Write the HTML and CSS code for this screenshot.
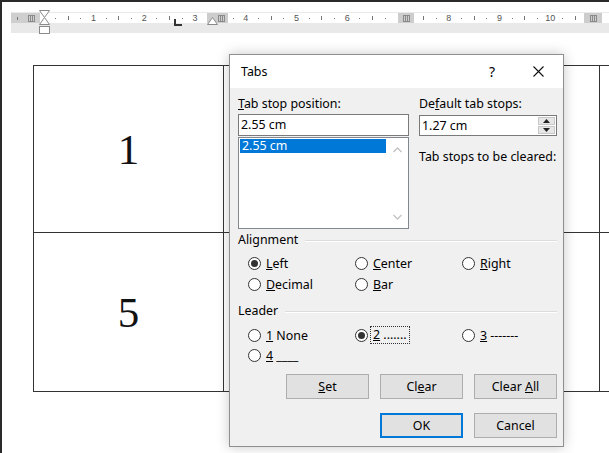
FILE: index.html
```html
<!DOCTYPE html>
<html>
<head>
<meta charset="utf-8">
<link rel="stylesheet" href="styles.css">
</head>
<body>
<div class="screen">
  <div class="ruler">
    <div class="strip">
      <span class="c"><i class="tick"></i></span><span class="c"></span><span class="c"></span>
      <span class="c"><i class="dot"></i></span><span class="c"><i class="tick"></i></span><span class="c"><i class="dot"></i></span>
      <span class="c">1</span><span class="c"><i class="dot"></i></span><span class="c"><i class="tick"></i></span><span class="c"><i class="dot"></i></span>
      <span class="c">2</span><span class="c"><i class="dot"></i></span><span class="c"><i class="tick"></i></span><span class="c"><i class="dot"></i></span>
      <span class="c">3</span><span class="c"><i class="dot"></i></span><span class="c"><i class="tick"></i></span><span class="c"><i class="dot"></i></span>
      <span class="c">4</span><span class="c"><i class="dot"></i></span><span class="c"><i class="tick"></i></span><span class="c"><i class="dot"></i></span>
      <span class="c">5</span><span class="c"><i class="dot"></i></span><span class="c"><i class="tick"></i></span><span class="c"><i class="dot"></i></span>
      <span class="c">6</span><span class="c"><i class="dot"></i></span><span class="c"><i class="tick"></i></span><span class="c"><i class="dot"></i></span>
      <span class="c"></span><span class="c"><i class="dot"></i></span><span class="c"><i class="tick"></i></span><span class="c"><i class="dot"></i></span>
      <span class="c">8</span><span class="c"><i class="dot"></i></span><span class="c"><i class="tick"></i></span><span class="c"><i class="dot"></i></span>
      <span class="c">9</span><span class="c"><i class="dot"></i></span><span class="c"><i class="tick"></i></span><span class="c"><i class="dot"></i></span>
      <span class="c">10</span><span class="c"><i class="dot"></i></span><span class="c"><i class="tick"></i></span><span class="c"><i class="dot"></i></span>
      <span class="c"></span><span class="c"><i class="colon"></i></span>
    </div>
    <span class="gray-margin"><i class="hatch"></i></span>
    <span class="colmark m1"><i class="hatch"></i></span>
    <span class="colmark m2"><i class="hatch"></i></span>
    <span class="colmark m3"><i class="hatch"></i></span>
    <svg class="hourglass" width="11" height="25" viewBox="0 0 11 25">
      <path d="M0.5 0.5 H10.5 L5.5 7.5 Z" fill="#fff" stroke="#8a8a8a"/>
      <path d="M5.5 7.5 L10.5 14.5 H0.5 Z" fill="#fff" stroke="#8a8a8a"/>
      <rect x="0.5" y="16.5" width="10" height="7" fill="#fff" stroke="#8a8a8a"/>
    </svg>
    <svg class="tabstop" width="8" height="7" viewBox="0 0 8 7">
      <path d="M1 0 V6 H8" fill="none" stroke="#333" stroke-width="2"/>
    </svg>
    <svg class="rindent" width="11" height="8" viewBox="0 0 11 8">
      <path d="M5.5 0.5 L10.5 7.5 H0.5 Z" fill="#fff" stroke="#8a8a8a"/>
    </svg>
  </div>

  <table class="doc-table">
    <tr class="r1"><td class="num">1</td><td></td><td></td><td></td></tr>
    <tr class="r2"><td class="num">5</td><td></td><td></td><td></td></tr>
  </table>

  <div class="dialog">
    <div class="titlebar">
      <span class="title">Tabs</span>
      <span class="tb-btn">?</span>
      <span class="tb-btn close">
        <svg width="11" height="11" viewBox="0 0 11 11"><path d="M0.5 0.5 L10.5 10.5 M10.5 0.5 L0.5 10.5" stroke="#111" stroke-width="1.1"/></svg>
      </span>
    </div>
    <div class="body">
      <div class="top">
        <div class="col">
          <div class="lbl"><u>T</u>ab stop position:</div>
          <div class="input">2.55 cm</div>
          <div class="listbox">
            <div class="items"><div class="sel">2.55 cm</div></div>
            <div class="sbar">
              <svg width="9" height="6" viewBox="0 0 9 6"><path d="M0.5 5 L4.5 1 L8.5 5" fill="none" stroke="#c2c2c2" stroke-width="1.3"/></svg>
              <svg width="9" height="6" viewBox="0 0 9 6"><path d="M0.5 1 L4.5 5 L8.5 1" fill="none" stroke="#c2c2c2" stroke-width="1.3"/></svg>
            </div>
          </div>
        </div>
        <div class="col">
          <div class="lbl">De<u>f</u>ault tab stops:</div>
          <div class="input spin">
            <span class="val">1.27 cm</span>
            <span class="spinbtns">
              <span class="sb"><svg width="7" height="4" viewBox="0 0 7 4"><path d="M0 4 L3.5 0 L7 4 Z" fill="#222"/></svg></span>
              <span class="sb"><svg width="7" height="4" viewBox="0 0 7 4"><path d="M0 0 L3.5 4 L7 0 Z" fill="#222"/></svg></span>
            </span>
          </div>
          <div class="lbl cleared">Tab stops to be cleared:</div>
        </div>
      </div>

      <div class="group">
        <div class="glabel"><span>Alignment</span><i class="gline"></i></div>
        <div class="radios align">
          <label class="radio"><i class="circle on"></i><span><u>L</u>eft</span></label>
          <label class="radio"><i class="circle"></i><span><u>C</u>enter</span></label>
          <label class="radio"><i class="circle"></i><span><u>R</u>ight</span></label>
          <label class="radio"><i class="circle"></i><span><u>D</u>ecimal</span></label>
          <label class="radio"><i class="circle"></i><span><u>B</u>ar</span></label>
        </div>
      </div>

      <div class="group leader">
        <div class="glabel"><span>Leader</span><i class="gline"></i></div>
        <div class="radios lead">
          <label class="radio"><i class="circle"></i><span><u>1</u> None</span></label>
          <label class="radio"><i class="circle on"></i><span class="focus"><u>2</u> .......</span></label>
          <label class="radio"><i class="circle"></i><span><u>3</u> -------</span></label>
          <label class="radio"><i class="circle"></i><span><u>4</u> ____</span></label>
        </div>
      </div>

      <div class="btnrow first">
        <span class="btn"><span><u>S</u>et</span></span>
        <span class="btn"><span>Cl<u>e</u>ar</span></span>
        <span class="btn"><span>Clear <u>A</u>ll</span></span>
      </div>
      <div class="btnrow second">
        <span class="btn default"><span>OK</span></span>
        <span class="btn"><span>Cancel</span></span>
      </div>
    </div>
  </div>
</div>
</body>
</html>
```

FILE: styles.css
```css
html, body {
  margin: 0;
  padding: 0;
  width: 609px;
  height: 453px;
  overflow: hidden;
  background: #fff;
}

.screen {
  position: relative;
  width: 607px;
  height: 451px;
  border-top: 2px solid #2a2a2a;
  border-left: 2px solid #2a2a2a;
  background: #fff;
  overflow: hidden;
  font-family: "Noto Sans", "DejaVu Sans", sans-serif;
}

/* ---------- ruler ---------- */
.ruler {
  position: relative;
  margin: 10px 0 0 9px;
  height: 21px;
  background: #e9e9e9;
  padding-top: 1px;
  box-sizing: border-box;
}
.strip {
  display: flex;
  height: 10px;
  background: #fff;
  font-family: "Liberation Sans", Arial, sans-serif;
  font-size: 9px;
  color: #555;
  line-height: 10px;
}
.c {
  flex: none;
  width: 12.7px;
  display: flex;
  align-items: center;
  justify-content: center;
}
.dot {
  display: block;
  width: 1px;
  height: 1px;
  background: #777;
}
.tick {
  display: block;
  width: 1px;
  height: 4px;
  background: #777;
}
.colon {
  display: block;
  width: 1px;
  height: 5px;
  background: linear-gradient(#666 0 1px, transparent 1px 4px, #666 4px 5px);
}
.hatch {
  display: block;
  width: 7px;
  height: 7px;
  background: repeating-linear-gradient(90deg, #8a8a8a 0 1px, transparent 1px 2px);
  border-top: 1px solid #8a8a8a;
  border-bottom: 1px solid #8a8a8a;
  box-sizing: border-box;
}
.gray-margin {
  position: absolute;
  left: 0;
  top: 1px;
  width: 29px;
  height: 10px;
  background: #cfcfcf;
  display: flex;
  align-items: center;
  padding-left: 17px;
  box-sizing: border-box;
}
.gray-margin::before {
  content: "";
  position: absolute;
  left: 6px;
  top: 4px;
  width: 1px;
  height: 3px;
  background: #777;
}
.colmark {
  position: absolute;
  top: 1px;
  height: 10px;
  background: #cdcdcd;
  display: flex;
  align-items: center;
  justify-content: flex-end;
  padding-right: 3px;
  box-sizing: border-box;
}
.m1 { left: 196px; width: 21px; }
.m2 { left: 387px; width: 16px; justify-content: center; padding: 0; }
.m3 { left: 573px; width: 18px; justify-content: center; padding: 0; }

.hourglass { position: absolute; left: 28px; top: -2px; }
.tabstop { position: absolute; left: 163px; top: 7px; }
.rindent { position: absolute; left: 196px; top: 5px; }

/* ---------- document table ---------- */
.doc-table {
  border-collapse: collapse;
  margin: 32px 0 0 31px;
  table-layout: fixed;
  width: 600px;
}
.doc-table td {
  border: 1px solid #333;
  padding: 0;
  text-align: center;
  vertical-align: middle;
  font-family: "Liberation Serif", "Times New Roman", serif;
  font-size: 43px;
  color: #111;
}
.doc-table td:nth-child(1) { width: 189px; }
.doc-table td:nth-child(2) { width: 187px; }
.doc-table td:nth-child(3) { width: 187px; }
.doc-table td:nth-child(4) { width: 37px; }
.doc-table .r1 td { height: 166px; }
.doc-table .r2 td { height: 158px; }

/* ---------- dialog ---------- */
.dialog {
  position: absolute;
  left: 227px;
  top: 52px;
  width: 335px;
  height: 393px;
  box-sizing: border-box;
  border: 1px solid #8f8f8f;
  background: #f0f0f0;
  box-shadow: 0 0 12px rgba(0, 0, 0, 0.22);
  font-size: 12.4px;
  color: #000;
  display: flex;
  flex-direction: column;
}
.titlebar {
  height: 33px;
  background: #fff;
  display: flex;
  align-items: center;
  padding-left: 11px;
  flex: none;
}
.title { flex: 1; }
.tb-btn {
  width: 46px;
  height: 33px;
  display: flex;
  align-items: center;
  justify-content: center;
  font-size: 14px;
}
.tb-btn.close { margin-right: 2px; }

.body {
  padding: 8px 6px 0 8px;
  display: flex;
  flex-direction: column;
}
.top {
  display: grid;
  grid-template-columns: 171px 138px;
  column-gap: 10px;
}
.col { display: flex; flex-direction: column; }
.lbl { height: 16px; line-height: 16px; white-space: nowrap; }
.input {
  margin-top: 2px;
  height: 22px;
  box-sizing: border-box;
  border: 1px solid #7a7a7a;
  background: #fff;
  line-height: 20px;
  padding-left: 2px;
}
.spin {
  margin-top: 3px;
  height: 21px;
  display: flex;
  justify-content: space-between;
  line-height: 19px;
}
.spinbtns {
  display: flex;
  flex-direction: column;
  width: 17px;
  padding: 1px;
  gap: 1px;
}
.sb {
  flex: 1;
  background: #e6e6e6;
  border: 1px solid #c8c8c8;
  display: flex;
  align-items: center;
  justify-content: center;
}
.cleared { margin-top: 13px; }

.listbox {
  margin-top: 1px;
  height: 92px;
  box-sizing: border-box;
  border: 1px solid #828790;
  background: #fff;
  display: flex;
}
.items { flex: 1; padding: 1px; }
.sel {
  background: #0078d7;
  color: #fff;
  height: 14px;
  line-height: 14px;
  padding-left: 2px;
}
.sbar {
  width: 21px;
  display: flex;
  flex-direction: column;
  justify-content: space-between;
  align-items: center;
  padding: 9px 0 8px;
  box-sizing: border-box;
}

.group { margin-top: 3px; }
.leader { margin-top: 8px; }
.glabel {
  display: flex;
  align-items: center;
  height: 16px;
  line-height: 16px;
}
.gline {
  flex: 1;
  height: 0;
  border-top: 1px solid #dcdcdc;
  border-bottom: 1px solid #fff;
  margin-left: 7px;
  margin-top: 2px;
}
.radios {
  display: grid;
  grid-template-columns: 107px 107px 107px;
  padding-left: 10px;
}
.align { margin-top: 5px; grid-auto-rows: 21px; }
.lead { margin-top: 6px; grid-auto-rows: 20px; }
.radio {
  display: flex;
  align-items: center;
  gap: 5px;
  white-space: nowrap;
}
.circle {
  width: 13px;
  height: 13px;
  box-sizing: border-box;
  border: 1px solid #333;
  border-radius: 50%;
  background: #fff;
  display: flex;
  align-items: center;
  justify-content: center;
  flex: none;
}
.circle.on::after {
  content: "";
  width: 7px;
  height: 7px;
  border-radius: 50%;
  background: #333;
}
.focus {
  outline: 1px dotted #333;
  padding: 0 2px;
  margin-left: -2px;
  line-height: 16px;
}

.btnrow {
  display: flex;
  justify-content: flex-end;
  gap: 11px;
}
.btnrow.first { margin-top: 9px; }
.btnrow.second { margin-top: 14px; }
.btn {
  width: 83px;
  height: 25px;
  box-sizing: border-box;
  border: 1px solid #adadad;
  background: #e1e1e1;
  display: flex;
  align-items: center;
  justify-content: center;
  white-space: pre;
}
.btn.default {
  border: 2px solid #0078d7;
}
```
